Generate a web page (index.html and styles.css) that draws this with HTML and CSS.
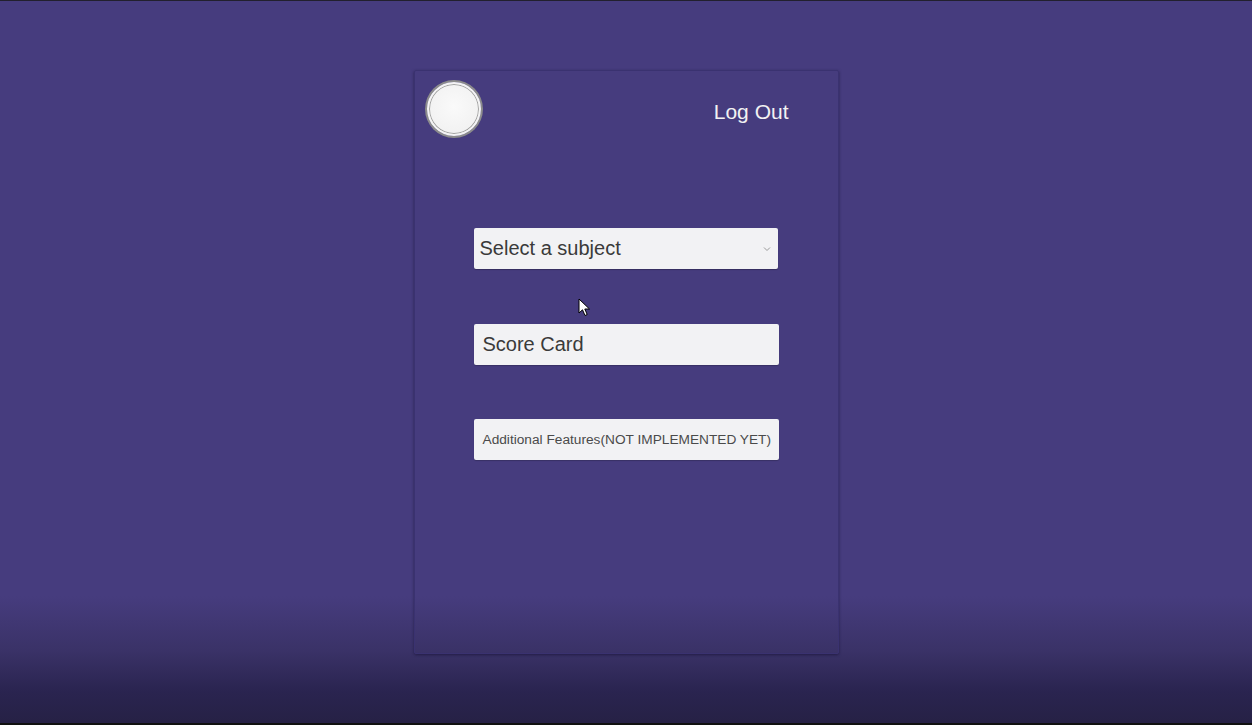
FILE: index.html
```html
<!DOCTYPE html>
<html>
<head>
<meta charset="utf-8">
<link rel="stylesheet" href="styles.css">
</head>
<body>
<div class="screen">
  <div class="card">
    <div class="card-head">
      <div class="avatar"></div>
      <a class="logout">Log Out</a>
    </div>
    <div class="fields">
      <div class="select">
        <span>Select a subject</span>
        <svg class="chev" width="8" height="6" viewBox="0 0 8 6"><path d="M1 1.5 L4 4.5 L7 1.5" fill="none" stroke="#9a9a9a" stroke-width="1"/></svg>
      </div>
      <div class="btn big">Score Card</div>
      <div class="btn small">Additional Features(NOT IMPLEMENTED YET)</div>
    </div>
  </div>
  <svg class="cursor" width="14" height="20" viewBox="0 0 14 20"><path d="M1 1 L1 15 L4.5 11.8 L7 17.5 L9.2 16.5 L6.8 11 L11.5 11 Z" fill="#fff" stroke="#000" stroke-width="1" stroke-linejoin="round"/></svg>
</div>
</body>
</html>
```
FILE: styles.css
```css
html, body {
  margin: 0;
  padding: 0;
}
body {
  width: 1252px;
  height: 725px;
  overflow: hidden;
  background: #111;
  font-family: "Liberation Sans", Arial, sans-serif;
}
.screen {
  position: relative;
  height: 722px;
  border-top: 1px solid #22202e;
  background: linear-gradient(to bottom, #463c7e 0px, #463c7e 595px, #3a3267 650px, #2a2450 690px, #262145 722px);
  display: flex;
  justify-content: center;
}
.card {
  margin-top: 69px;
  width: 423px;
  height: 582px;
  border: 1px solid #3a3270;
  border-radius: 2px;
  box-shadow: 0 1px 3px rgba(20, 15, 50, 0.6);
  display: flex;
  flex-direction: column;
}
.card-head {
  display: flex;
  justify-content: space-between;
  align-items: flex-start;
  padding: 10px 49px 0 10px;
}
.avatar {
  width: 50px;
  height: 50px;
  border-radius: 50%;
  background: radial-gradient(circle at 50% 45%, #fafafa 0%, #f2f2f2 70%, #e6e6e6 100%);
  border: 2px solid #f4f4f4;
  box-shadow: 0 0 0 2px #8c8c8c, inset 0 0 0 1px #a0a0a0;
  margin: 1px 0 0 2px;
}
.logout {
  color: #f2f2f2;
  font-size: 21px;
  margin-top: 19px;
  line-height: 24px;
}
.fields {
  display: flex;
  flex-direction: column;
  padding: 92px 59px 0 59px;
}
.select, .btn {
  background: #f2f2f4;
  border-radius: 2px;
  color: #3a3a3a;
  box-sizing: border-box;
  height: 41px;
  display: flex;
  align-items: center;
}
.select {
  width: 304px;
  font-size: 20px;
  padding: 0 6px 0 6px;
  justify-content: space-between;
  box-shadow: 0 1px 1px rgba(0,0,0,0.25);
}
.chev {
  margin-right: 1px;
}
.btn {
  width: 305px;
  padding-left: 9px;
  box-shadow: 0 1px 1px rgba(0,0,0,0.2);
}
.big {
  margin-top: 55px;
  font-size: 20px;
}
.small {
  margin-top: 54px;
  font-size: 13.7px;
  color: #4a4a4a;
  white-space: nowrap;
}
.cursor {
  position: absolute;
  left: 578px;
  top: 297px;
}
```
